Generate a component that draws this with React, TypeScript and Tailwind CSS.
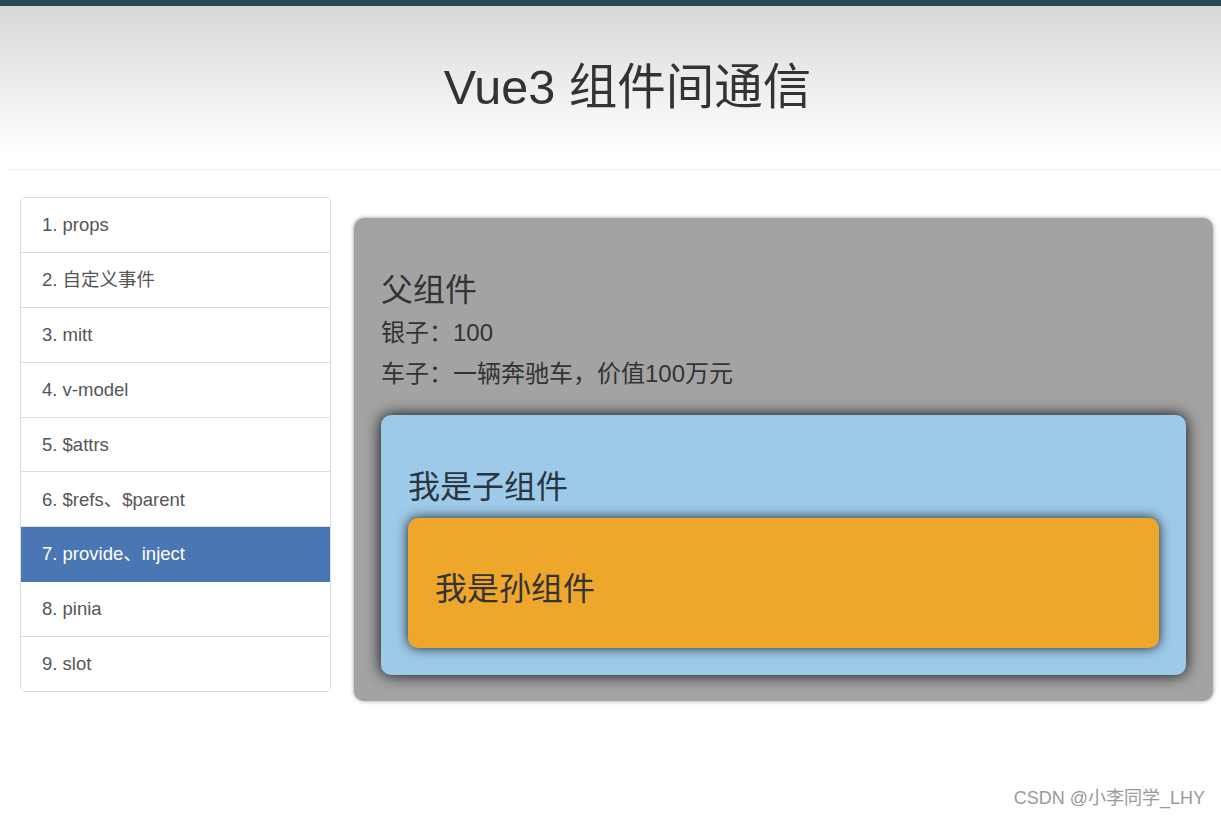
import React from "react";

const items = [
  "1. props",
  "2. 自定义事件",
  "3. mitt",
  "4. v-model",
  "5. $attrs",
  "6. $refs、$parent",
  "7. provide、inject",
  "8. pinia",
  "9. slot",
];

export default function App() {
  return (
    <div
      className="relative w-[1221px] h-[820px] overflow-hidden bg-white text-[#333]"
      style={{ fontFamily: '"Liberation Sans", Arial, "Noto Sans CJK SC", sans-serif' }}
    >
      <div className="h-[6px] bg-[#2c4858]" />
      <div className="h-[144px] bg-gradient-to-b from-[#d8d8d8] to-white pl-[34px] pt-[53px]">
        <h1 className="text-center text-[48.5px] leading-[56px] font-normal text-[#333]">Vue3 组件间通信</h1>
      </div>
      <div className="ml-[8px] mt-[19px] h-px bg-[#eeeeee]" />
      <div className="flex items-start pl-[20px] pt-[27px] gap-[23px]">
        <div className="w-[311px] border border-[#dddddd] rounded-[5px] overflow-hidden flex flex-col">
          {items.map((t, i) => {
            const active = i === 6;
            return (
              <div
                key={t}
                className={
                  "flex items-center pl-[21px] text-[18.5px] " +
                  (i < items.length - 1 ? "h-[54.9px] border-b " : "h-[53.9px] ") +
                  (active
                    ? "bg-[#4a77b4] text-white border-[#4a77b4]"
                    : "bg-white text-[#555] border-[#dddddd]")
                }
              >
                {t}
              </div>
            );
          })}
        </div>
        <div className="mt-[21px] w-[859px] h-[483px] bg-[#a3a3a3] rounded-[10px] shadow-[0_0_4px_rgba(0,0,0,0.4)] px-[27px] pt-[55px]">
          <h3 className="text-[32px] leading-[34px] font-normal">父组件</h3>
          <p className="mt-[10px] text-[24px] leading-[32px]">银子：100</p>
          <p className="mt-[9px] text-[24px] leading-[32px]">车子：一辆奔驰车，价值100万元</p>
          <div className="mt-[25px] h-[260px] bg-[#9dcae8] rounded-[10px] shadow-[0_0_15px_rgba(0,0,0,0.95)] px-[27px] pt-[55px]">
            <h3 className="text-[32px] leading-[34px] font-normal text-[#2b3540]">我是子组件</h3>
            <div className="mt-[14px] h-[130px] bg-[#efa72b] rounded-[10px] shadow-[0_0_12px_rgba(0,0,0,0.85)] px-[27px] pt-[54px]">
              <h3 className="text-[32px] leading-[34px] font-normal text-[#333]">我是孙组件</h3>
            </div>
          </div>
        </div>
      </div>
      <div className="absolute right-[16px] bottom-[8px] text-[18px] text-[#9a9a9a] [text-shadow:0_0_2px_rgba(255,255,255,0.9)]">
        CSDN @小李同学_LHY
      </div>
    </div>
  );
}
